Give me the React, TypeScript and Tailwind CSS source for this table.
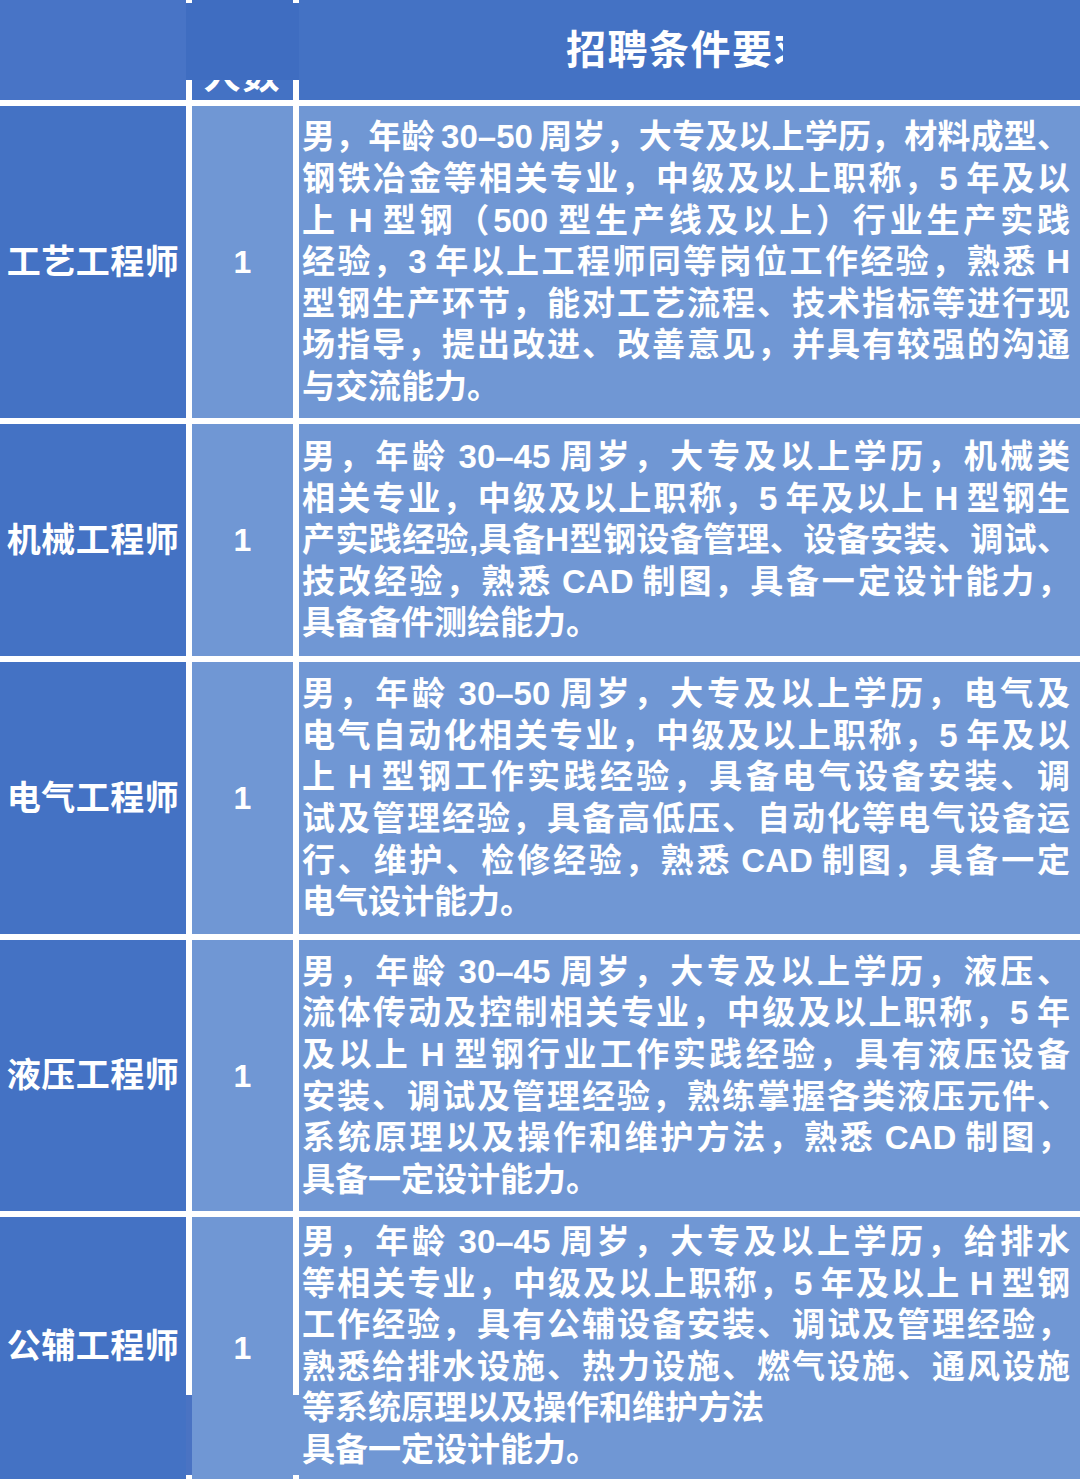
import { Fragment } from 'react';

type Row = {
  title: string;
  count: string;
  height: string;
  lines: string[];
};

const rows: Row[] = [
  {
    title: '工艺工程师',
    count: '1',
    height: 'h-[312px]',
    lines: [
      '男，年龄 30–50 周岁，大专及以上学历，材料成型、',
      '钢铁冶金等相关专业，中级及以上职称，5 年及以',
      '上 H 型钢（500 型生产线及以上）行业生产实践',
      '经验，3 年以上工程师同等岗位工作经验，熟悉 H',
      '型钢生产环节，能对工艺流程、技术指标等进行现',
      '场指导，提出改进、改善意见，并具有较强的沟通',
      '与交流能力。',
    ],
  },
  {
    title: '机械工程师',
    count: '1',
    height: 'h-[232px]',
    lines: [
      '男，年龄 30–45 周岁，大专及以上学历，机械类',
      '相关专业，中级及以上职称，5 年及以上 H 型钢生',
      '产实践经验,具备H型钢设备管理、设备安装、调试、',
      '技改经验，熟悉 CAD 制图，具备一定设计能力，',
      '具备备件测绘能力。',
    ],
  },
  {
    title: '电气工程师',
    count: '1',
    height: 'h-[272px]',
    lines: [
      '男，年龄 30–50 周岁，大专及以上学历，电气及',
      '电气自动化相关专业，中级及以上职称，5 年及以',
      '上 H 型钢工作实践经验，具备电气设备安装、调',
      '试及管理经验，具备高低压、自动化等电气设备运',
      '行、维护、检修经验，熟悉 CAD 制图，具备一定',
      '电气设计能力。',
    ],
  },
  {
    title: '液压工程师',
    count: '1',
    height: 'h-[271px]',
    lines: [
      '男，年龄 30–45 周岁，大专及以上学历，液压、',
      '流体传动及控制相关专业，中级及以上职称，5 年',
      '及以上 H 型钢行业工作实践经验，具有液压设备',
      '安装、调试及管理经验，熟练掌握各类液压元件、',
      '系统原理以及操作和维护方法，熟悉 CAD 制图，',
      '具备一定设计能力。',
    ],
  },
];

const lastRow = {
  title: '公辅工程师',
  count: '1',
  lines: [
    '男，年龄 30–45 周岁，大专及以上学历，给排水',
    '等相关专业，中级及以上职称，5 年及以上 H 型钢',
    '工作经验，具有公辅设备安装、调试及管理经验，',
    '熟悉给排水设施、热力设施、燃气设施、通风设施',
  ],
};

function Lines({ lines, lastJustified = false }: { lines: string[]; lastJustified?: boolean }) {
  return (
    <>
      {lines.map((line, i) => {
        const justify = i < lines.length - 1 || lastJustified;
        return (
          <div
            key={i}
            className={
              justify
                ? 'h-[41.6px] overflow-hidden whitespace-nowrap text-justify leading-[41.6px] [text-align-last:justify]'
                : 'h-[41.6px] overflow-hidden whitespace-nowrap leading-[41.6px]'
            }
          >
            {line}
          </div>
        );
      })}
    </>
  );
}

export default function App() {
  return (
    <div className="flex h-[1479px] w-[1080px] flex-col overflow-hidden bg-white font-['Liberation_Sans','Noto_Sans_CJK_SC',sans-serif] font-bold text-white">
      {/* header */}
      <div className="flex h-[100px]">
        <div className="w-[186px] bg-[#4874c6]" />
        <div className="flex w-[6px] flex-col">
          <div className="h-[3px] bg-white" />
          <div className="h-[77px] bg-[#3f6dc1]" />
          <div className="flex-1 bg-white" />
        </div>
        <div className="flex w-[101px] flex-col">
          <div className="h-[80px] bg-[#3f6dc1]" />
          <div className="h-[20px] overflow-hidden bg-[#4472c4]">
            <div className="-mt-[21px] text-center text-[37px] leading-[36px] tracking-[2px]">人数</div>
          </div>
        </div>
        <div className="flex w-[6px] flex-col">
          <div className="h-[3px] bg-white" />
          <div className="h-[77px] bg-[#3f6dc1]" />
          <div className="flex-1 bg-white" />
        </div>
        <div className="flex flex-1 items-center bg-[#4472c4] pl-[267px] text-[40px] tracking-[1.5px]">
          <span>招聘条件要</span>
          <span className="inline-block w-[9px] overflow-hidden whitespace-nowrap">求</span>
        </div>
      </div>

      {rows.map((row) => (
        <Fragment key={row.title}>
          <div className="h-[6px] bg-white" />
          <div className={`flex ${row.height}`}>
            <div className="flex w-[186px] items-center justify-center bg-[#4472c4] text-[34px] tracking-[0.5px]">
              {row.title}
            </div>
            <div className="w-[6px] bg-white" />
            <div className="flex w-[101px] items-center justify-center bg-[#7097d4] text-[32px]">
              {row.count}
            </div>
            <div className="w-[6px] bg-white" />
            <div className="flex flex-1 flex-col justify-center bg-[#7097d4] pl-[3px] pr-[10px] text-[33px] [word-spacing:-3px]">
              <Lines lines={row.lines} />
            </div>
          </div>
        </Fragment>
      ))}

      <div className="h-[6px] bg-white" />
      <div className="flex flex-1">
        <div className="flex w-[186px] flex-col bg-[#4472c4]">
          <div className="flex h-[178px] items-end justify-center pb-[4px] text-[34px] tracking-[0.5px]">
            <div className="translate-y-[-19px]">{lastRow.title}</div>
          </div>
        </div>
        <div className="flex w-[6px] flex-col">
          <div className="h-[178px] bg-white" />
          <div className="flex-1 bg-[#4a73c3]" />
          <div className="h-[4px] bg-white" />
        </div>
        <div className="flex w-[101px] flex-col bg-[#7097d4]">
          <div className="flex h-[178px] items-end justify-center pb-[4px] text-[32px]">
            <div className="translate-y-[-19px]">{lastRow.count}</div>
          </div>
        </div>
        <div className="flex w-[6px] flex-col">
          <div className="h-[178px] bg-white" />
          <div className="flex-1 bg-[#7097d4]" />
          <div className="h-[4px] bg-white" />
        </div>
        <div className="flex flex-1 flex-col bg-[#7097d4] pl-[3px] pr-[10px] pt-[4px] text-[33px] [word-spacing:-3px]">
          <Lines lines={lastRow.lines} lastJustified />
          <div className="h-[41.6px] leading-[41.6px]">等系统原理以及操作和维护方法</div>
          <div className="h-[41.6px] leading-[41.6px]">具备一定设计能力。</div>
        </div>
      </div>
    </div>
  );
}
